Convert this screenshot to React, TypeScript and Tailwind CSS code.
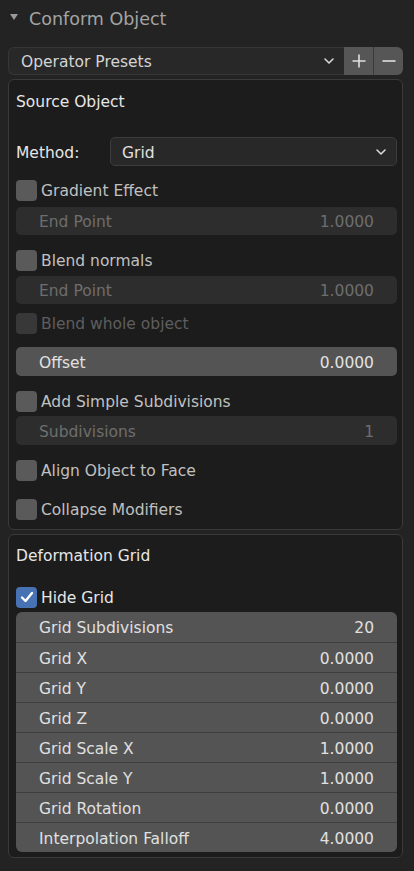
import React from "react";

const font = { fontFamily: '"DejaVu Sans", "Liberation Sans", sans-serif' };

function Chevron({ className = "" }: { className?: string }) {
  return (
    <svg width="12" height="8" viewBox="0 0 12 8" className={className}>
      <path d="M2 2 L6 6 L10 2" fill="none" stroke="#d8d8d8" strokeWidth="1.6" strokeLinecap="round" strokeLinejoin="round" />
    </svg>
  );
}

function Check({ label, checked = false, disabled = false, mt }: { label: string; checked?: boolean; disabled?: boolean; mt: string }) {
  return (
    <div className={`flex h-[22px] items-center ${mt}`}>
      <div
        className={`flex h-[21px] w-[21px] items-center justify-center rounded-[4px] ${
          checked ? "bg-[#4772b3]" : disabled ? "bg-[#383838]" : "bg-[#5a5a5a]"
        }`}
      >
        {checked && (
          <svg width="16" height="16" viewBox="0 0 16 16">
            <path d="M3 8.5 L6.5 12 L13 4" fill="none" stroke="#ffffff" strokeWidth="2.4" strokeLinecap="round" strokeLinejoin="round" />
          </svg>
        )}
      </div>
      <span
        className={`ml-[4px] pt-[4px] text-[15.5px] ${
          checked ? "text-[#e6e6e6]" : disabled ? "text-[#5e5e5e]" : "text-[#c0c0c0]"
        }`}
      >
        {label}
      </span>
    </div>
  );
}

function Field({ label, value, disabled = false, mt, h }: { label: string; value: string; disabled?: boolean; mt: string; h: string }) {
  return (
    <div
      className={`flex ${h} items-center justify-between rounded-[5px] px-[23px] text-[15.5px] ${mt} ${
        disabled ? "bg-[#2d2d2d] text-[#6e6e6e]" : "bg-[#545454] text-[#e2e2e2]"
      }`}
    >
      <span className="pt-[4px]">{label}</span>
      <span className="pt-[4px]">{value}</span>
    </div>
  );
}

const gridRows: [string, string][] = [
  ["Grid Subdivisions", "20"],
  ["Grid X", "0.0000"],
  ["Grid Y", "0.0000"],
  ["Grid Z", "0.0000"],
  ["Grid Scale X", "1.0000"],
  ["Grid Scale Y", "1.0000"],
  ["Grid Rotation", "0.0000"],
  ["Interpolation Falloff", "4.0000"],
];

export default function App() {
  return (
    <div className="h-[871px] w-[414px] overflow-hidden bg-[#232323]" style={font}>
      {/* Header */}
      <div className="flex h-[34px] items-center pl-[9px]">
        <svg width="10" height="8" viewBox="0 0 10 8">
          <path d="M1 1 L9 1 L5 7 Z" fill="#9a9a9a" />
        </svg>
        <span className="ml-[10px] pt-[4px] text-[17.5px] text-[#a3a3a3]">Conform Object</span>
      </div>

      <div className="ml-[8px] w-[395px]">
        {/* Presets */}
        <div className="mt-[13px] flex h-[28px]">
          <div className="flex flex-1 items-center justify-between rounded-l-[6px] border border-r-0 border-[#363636] bg-[#282828] pl-[12px] pr-[9px]">
            <span className="pt-[4px] text-[15.5px] text-[#d4d4d4]">Operator Presets</span>
            <Chevron />
          </div>
          <div className="flex w-[30px] items-center justify-center border-r border-[#3a3a3a] bg-[#565656]">
            <svg width="16" height="16" viewBox="0 0 16 16">
              <path d="M8 1.5 V14.5 M1.5 8 H14.5" stroke="#e0e0e0" strokeWidth="1.6" />
            </svg>
          </div>
          <div className="flex w-[29px] items-center justify-center rounded-r-[6px] bg-[#565656]">
            <svg width="16" height="16" viewBox="0 0 16 16">
              <path d="M1.5 8 H14.5" stroke="#e0e0e0" strokeWidth="1.6" />
            </svg>
          </div>
        </div>

        {/* Source Object box */}
        <div className="mt-[4px] rounded-[6px] border border-[#3a3a3a] bg-[#1c1c1c] pb-[9px] pl-[7px] pr-[5px]">
          <div className="mt-[7px] flex h-[28px] items-center pt-[4px] text-[15.5px] text-[#e6e6e6]">Source Object</div>

          <div className="mt-[22px] flex h-[29px] items-center">
            <span className="w-[94px] pt-[4px] text-[15.5px] text-[#e6e6e6]">Method:</span>
            <div className="flex h-[29px] flex-1 items-center justify-between rounded-[5px] border border-[#3c3c3c] bg-[#282828] pl-[11px] pr-[9px]">
              <span className="pt-[4px] text-[15.5px] text-[#e0e0e0]">Grid</span>
              <Chevron />
            </div>
          </div>

          <Check label="Gradient Effect" mt="mt-[13px]" />
          <Field label="End Point" value="1.0000" disabled mt="mt-[6px]" h="h-[28px]" />
          <Check label="Blend normals" mt="mt-[14px]" />
          <Field label="End Point" value="1.0000" disabled mt="mt-[5px]" h="h-[28px]" />
          <Check label="Blend whole object" disabled mt="mt-[8px]" />
          <Field label="Offset" value="0.0000" mt="mt-[13px]" h="h-[29px]" />
          <Check label="Add Simple Subdivisions" mt="mt-[14px]" />
          <Field label="Subdivisions" value="1" disabled mt="mt-[4px]" h="h-[29px]" />
          <Check label="Align Object to Face" mt="mt-[14px]" />
          <Check label="Collapse Modifiers" mt="mt-[17px]" />
        </div>

        {/* Deformation Grid box */}
        <div className="mt-[4px] rounded-[6px] border border-[#3a3a3a] bg-[#1c1c1c] pb-[5px] pl-[7px] pr-[5px]">
          <div className="mt-[6px] flex h-[28px] items-center pt-[4px] text-[15.5px] text-[#e6e6e6]">Deformation Grid</div>
          <Check label="Hide Grid" checked mt="mt-[17px]" />
          <div className="mt-[4px] overflow-hidden rounded-[6px] bg-[#545454]">
            {gridRows.map(([l, v], i) => (
              <div
                key={l}
                className={`flex h-[30px] items-center justify-between px-[23px] text-[15.5px] text-[#e0e0e0] ${
                  i > 0 ? "border-t border-[#3e3e3e]" : ""
                }`}
              >
                <span className="pt-[4px]">{l}</span>
                <span className="pt-[4px]">{v}</span>
              </div>
            ))}
          </div>
        </div>
      </div>
    </div>
  );
}
